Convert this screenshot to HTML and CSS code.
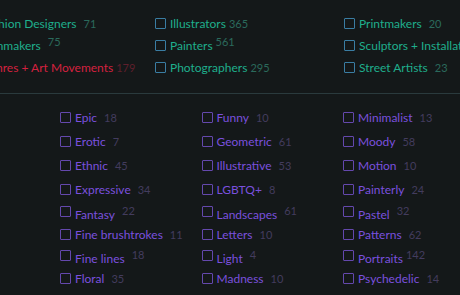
FILE: index.html
```html
<!DOCTYPE html>
<html lang="en">
<head>
  <meta charset="utf-8">
  <title>Filters</title>
  <link rel="stylesheet" href="styles.css">
</head>
<body>
  <div class="types">
    <label class="opt"><span class="box"></span>Fashion Designers<span class="count">71</span></label>
    <label class="opt"><span class="box"></span>Illustrators<span class="count near">365</span></label>
    <label class="opt"><span class="box"></span>Printmakers<span class="count">20</span></label>
    <label class="opt"><span class="box"></span>Filmmakers<span class="count up">75</span></label>
    <label class="opt"><span class="box"></span>Painters<span class="count up near">561</span></label>
    <label class="opt"><span class="box"></span>Sculptors + Installation Artists<span class="count">40</span></label>
    <label class="opt genre"><span class="box"></span>Genres + Art Movements<span class="count near">179</span></label>
    <label class="opt"><span class="box"></span>Photographers<span class="count near">295</span></label>
    <label class="opt"><span class="box"></span>Street Artists<span class="count">23</span></label>
  </div>

  <hr class="divider">

  <div class="tags">
    <label class="tag"><span class="box"></span>Epic<span class="count">18</span></label>
    <label class="tag"><span class="box"></span>Funny<span class="count">10</span></label>
    <label class="tag"><span class="box"></span>Minimalist<span class="count">13</span></label>

    <label class="tag"><span class="box"></span>Erotic<span class="count">7</span></label>
    <label class="tag"><span class="box"></span>Geometric<span class="count">61</span></label>
    <label class="tag"><span class="box"></span>Moody<span class="count">58</span></label>

    <label class="tag"><span class="box"></span>Ethnic<span class="count">45</span></label>
    <label class="tag"><span class="box"></span>Illustrative<span class="count">53</span></label>
    <label class="tag"><span class="box"></span>Motion<span class="count">10</span></label>

    <label class="tag"><span class="box"></span>Expressive<span class="count">34</span></label>
    <label class="tag"><span class="box"></span>LGBTQ+<span class="count">8</span></label>
    <label class="tag"><span class="box"></span>Painterly<span class="count">24</span></label>

    <label class="tag low"><span class="box"></span>Fantasy<span class="count up">22</span></label>
    <label class="tag low"><span class="box"></span>Landscapes<span class="count up">61</span></label>
    <label class="tag low"><span class="box"></span>Pastel<span class="count up">32</span></label>

    <label class="tag"><span class="box"></span>Fine brushtrokes<span class="count">11</span></label>
    <label class="tag"><span class="box"></span>Letters<span class="count">10</span></label>
    <label class="tag"><span class="box"></span>Patterns<span class="count">62</span></label>

    <label class="tag low"><span class="box"></span>Fine lines<span class="count up">18</span></label>
    <label class="tag low"><span class="box"></span>Light<span class="count up">4</span></label>
    <label class="tag low"><span class="box"></span>Portraits<span class="count up near">142</span></label>

    <label class="tag"><span class="box"></span>Floral<span class="count">35</span></label>
    <label class="tag"><span class="box"></span>Madness<span class="count">10</span></label>
    <label class="tag"><span class="box"></span>Psychedelic<span class="count">14</span></label>
  </div>
</body>
</html>
```

FILE: styles.css
```css
* {
  box-sizing: border-box;
  margin: 0;
  padding: 0;
}

body {
  background: #141819;
  font-family: Lato, "Open Sans", sans-serif;
  font-size: 12px;
  overflow: hidden;
  width: 460px;
  height: 295px;
}

.box {
  display: inline-block;
  width: 11px;
  height: 11px;
  border: 1px solid #3a7da3;
  border-radius: 1px;
  margin-right: 4px;
  flex-shrink: 0;
}

.count {
  font-size: 11px;
  margin-left: 7px;
}

.count.near {
  margin-left: 3px;
}

.count.up {
  position: relative;
  top: -4px;
}

/* artist types */
.types {
  display: grid;
  grid-template-columns: repeat(3, 189px);
  grid-auto-rows: 22px;
  margin-left: -34px;
  padding-top: 12px;
  width: 600px;
}

.opt {
  display: flex;
  align-items: center;
  white-space: nowrap;
  color: #1fae8c;
}

.opt .count {
  color: #2b6a5c;
}

.opt.genre {
  color: #d4213f;
}

.opt.genre .count {
  color: #5e1f2c;
}

.divider {
  border: none;
  border-top: 1px solid #2a3a3d;
  margin-top: 15px;
}

/* style tags */
.tags {
  display: grid;
  grid-template-columns: repeat(3, 141.5px);
  grid-template-rows: repeat(4, 24px) repeat(4, 22px);
  padding-left: 60px;
  padding-top: 11px;
}

.tag {
  display: flex;
  align-items: center;
  white-space: nowrap;
  color: #7a50de;
}

.tag .box {
  border-color: #6448ad;
}

.tag .count {
  color: #433c5e;
}

.tag.low {
  padding-top: 4px;
}

.tag.low .box {
  position: relative;
  top: -3px;
}
```
